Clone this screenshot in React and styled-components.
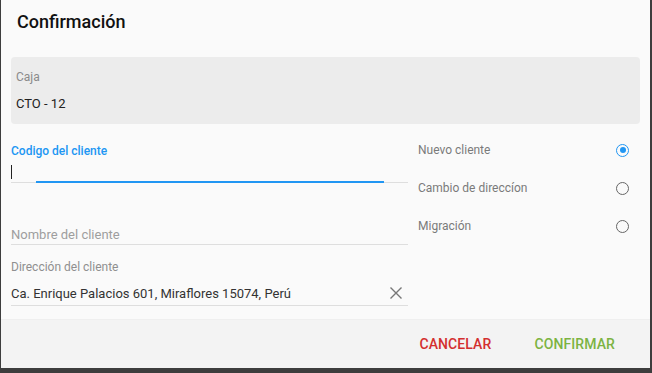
import React, { useState } from 'react';
import styled, { createGlobalStyle } from 'styled-components';

const GlobalStyle = createGlobalStyle`
  html, body {
    margin: 0;
    padding: 0;
    background: #3d3d3d;
    font-family: Roboto, "Liberation Sans", sans-serif;
  }
`;

const Screen = styled.div`
  width: 652px;
  height: 373px;
  overflow: hidden;
`;

const Dialog = styled.div`
  margin-left: 1px;
  width: 649px;
  height: 368px;
  background: #fafafa;
  display: flex;
  flex-direction: column;
`;

const Header = styled.div`
  padding: 10px 16px 0;
  height: 24px;
  font-size: 18px;
  line-height: 24px;
  font-weight: 500;
  color: #111;
`;

const Body = styled.div`
  flex: 1;
  padding: 23px 10px 0;
`;

const InfoBox = styled.div`
  height: 45px;
  padding: 12px 5px 10px;
  background: #ececec;
  border-radius: 4px;
  display: flex;
  flex-direction: column;
  gap: 9px;
`;

const InfoLabel = styled.div`
  font-size: 12px;
  line-height: 16px;
  color: #8a8a8a;
`;

const InfoValue = styled.div`
  font-size: 13px;
  line-height: 20px;
  color: #222;
`;

const Columns = styled.div`
  display: grid;
  grid-template-columns: 397px 212px;
  gap: 10px;
`;

const FieldColumn = styled.div`
  display: flex;
  flex-direction: column;
`;

const Field = styled.div`
  display: flex;
  flex-direction: column;
  margin-top: ${p => p.$top}px;
`;

const Label = styled.div`
  font-size: 12px;
  line-height: 16px;
  color: ${p => (p.$active ? '#2196f3' : '#8f8f8f')};
  font-weight: ${p => (p.$active ? 500 : 400)};
`;

const InputRow = styled.div`
  position: relative;
  height: ${p => p.$h}px;
  box-sizing: border-box;
  padding-top: ${p => p.$pt || 0}px;
  display: flex;
  align-items: center;
  border-bottom: 1px solid #dedede;
  font-size: 13px;
  color: #333;
`;

const Cursor = styled.span`
  width: 1px;
  height: 14px;
  background: #222;
  margin-top: 1px;
`;

const FocusBar = styled.div`
  position: absolute;
  left: 25px;
  right: 24px;
  bottom: -1px;
  height: 2px;
  background: #2196f3;
`;

const Placeholder = styled.span`
  color: #9e9e9e;
`;

const Value = styled.span`
  flex: 1;
`;

const ClearButton = styled.button`
  border: 0;
  background: none;
  padding: 0;
  margin-right: 5px;
  width: 14px;
  height: 14px;
  display: flex;
  cursor: pointer;
`;

const OptionColumn = styled.div`
  display: flex;
  flex-direction: column;
  margin-top: 7px;
`;

const Option = styled.label`
  height: 38px;
  display: flex;
  align-items: center;
  justify-content: space-between;
  font-size: 12px;
  color: #7a7a7a;
  cursor: pointer;
`;

const Radio = styled.span`
  width: 13px;
  height: 13px;
  box-sizing: border-box;
  border-radius: 50%;
  border: 1.5px solid ${p => (p.$on ? '#2196f3' : '#666')};
  display: flex;
  align-items: center;
  justify-content: center;
  margin-right: 1px;

  &::after {
    content: '';
    width: 6px;
    height: 6px;
    border-radius: 50%;
    background: ${p => (p.$on ? '#2196f3' : 'transparent')};
  }
`;

const Footer = styled.div`
  height: 48px;
  background: #f3f3f3;
  border-top: 1px solid #efefef;
  display: flex;
  align-items: center;
  justify-content: flex-end;
  padding-right: 19px;
  gap: 11px;
`;

const ActionButton = styled.button`
  border: 0;
  background: none;
  padding: 8px 16px;
  font-family: Roboto, "Liberation Sans", sans-serif;
  font-size: 14px;
  font-weight: 500;
  letter-spacing: 0.1px;
  color: ${p => p.$color};
  cursor: pointer;
`;

const options = ['Nuevo cliente', 'Cambio de direccíon', 'Migración'];

const App = () => {
  const [selected, setSelected] = useState(0);
  const [address, setAddress] = useState('Ca. Enrique Palacios 601, Miraflores 15074, Perú');

  return (
    <Screen>
      <GlobalStyle />
      <Dialog>
        <Header>Confirmación</Header>
        <Body>
          <InfoBox>
            <InfoLabel>Caja</InfoLabel>
            <InfoValue>CTO - 12</InfoValue>
          </InfoBox>
          <Columns>
            <FieldColumn>
              <Field $top={19}>
                <Label $active>Codigo del cliente</Label>
                <InputRow $h={24} $pt={1}>
                  <Cursor />
                  <FocusBar />
                </InputRow>
              </Field>
              <Field $top={41}>
                <InputRow $h={21} $pt={1}>
                  <Placeholder>Nombre del cliente</Placeholder>
                </InputRow>
              </Field>
              <Field $top={14}>
                <Label>Dirección del cliente</Label>
                <InputRow $h={31} $pt={6}>
                  <Value>{address}</Value>
                  {address && (
                    <ClearButton onClick={() => setAddress('')}>
                      <svg width="14" height="14" viewBox="0 0 14 14">
                        <path d="M1.5 1.5 L12.5 12.5 M12.5 1.5 L1.5 12.5" stroke="#777" strokeWidth="1.4" />
                      </svg>
                    </ClearButton>
                  )}
                </InputRow>
              </Field>
            </FieldColumn>
            <OptionColumn>
              {options.map((o, i) => (
                <Option key={o} onClick={() => setSelected(i)}>
                  {o}
                  <Radio $on={selected === i} />
                </Option>
              ))}
            </OptionColumn>
          </Columns>
        </Body>
        <Footer>
          <ActionButton $color="#d32f2f">CANCELAR</ActionButton>
          <ActionButton $color="#7cb342">CONFIRMAR</ActionButton>
        </Footer>
      </Dialog>
    </Screen>
  );
};

export default App;
